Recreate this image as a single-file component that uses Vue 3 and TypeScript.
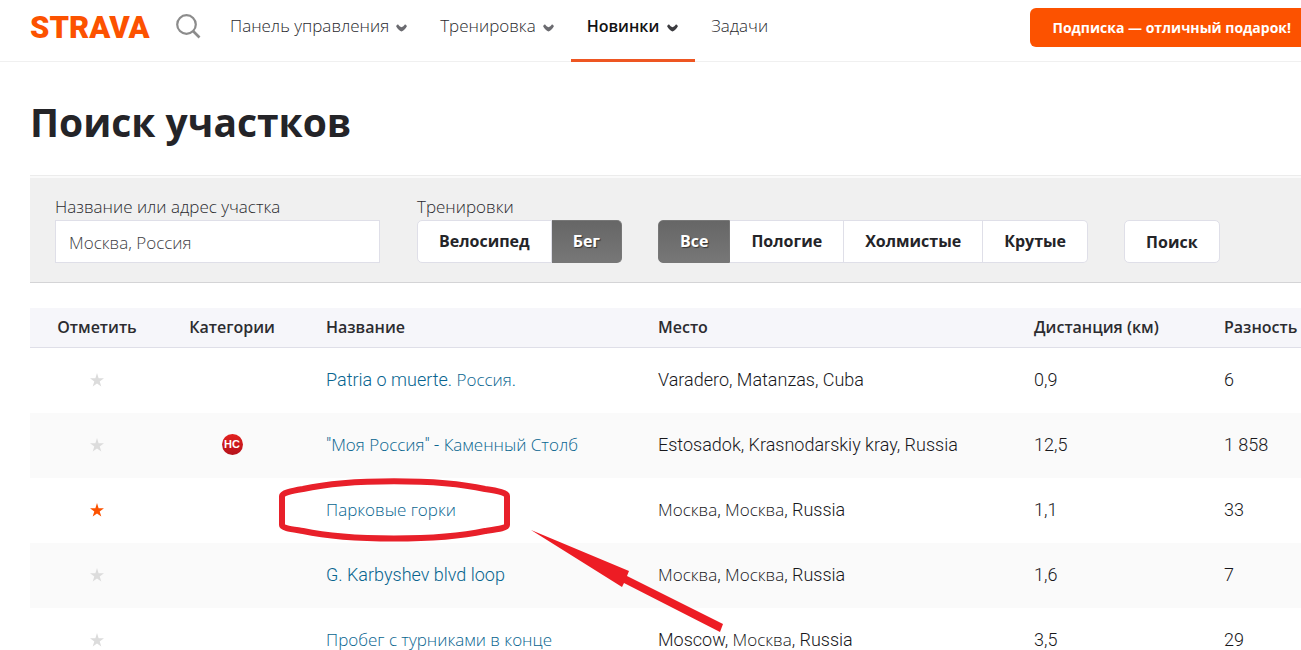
<script setup lang="ts">
import { ref } from 'vue'

interface NavItem {
  label: string
  menu: boolean
  active?: boolean
}

interface Segment {
  name: string
  place: string
  distance: string
  elevation: string
  starred?: boolean
  hc?: boolean
  marked?: boolean
}

interface Run {
  text: string
  latin: boolean
}

const nav: NavItem[] = [
  { label: 'Панель управления', menu: true },
  { label: 'Тренировка', menu: true },
  { label: 'Новинки', menu: true, active: true },
  { label: 'Задачи', menu: false },
]

const activities = ['Велосипед', 'Бег']
const terrains = ['Все', 'Пологие', 'Холмистые', 'Крутые']
const activity = ref('Бег')
const terrain = ref('Все')
const query = ref('Москва, Россия')

const segments = ref<Segment[]>([
  { name: 'Patria o muerte. Россия.', place: 'Varadero, Matanzas, Cuba', distance: '0,9', elevation: '6' },
  { name: '"Моя Россия" - Каменный Столб', place: 'Estosadok, Krasnodarskiy kray, Russia', distance: '12,5', elevation: '1 858', hc: true },
  { name: 'Парковые горки', place: 'Москва, Москва, Russia', distance: '1,1', elevation: '33', starred: true, marked: true },
  { name: 'G. Karbyshev blvd loop', place: 'Москва, Москва, Russia', distance: '1,6', elevation: '7' },
  { name: 'Пробег с турниками в конце', place: 'Moscow, Москва, Russia', distance: '3,5', elevation: '29' },
])

// Cyrillic and Latin runs are set in different families.
function runs(text: string): Run[] {
  return (text.match(/[А-Яа-яЁё]+|[^А-Яа-яЁё]+/g) ?? []).map((part) => ({
    text: part,
    latin: !/[А-Яа-яЁё]/.test(part),
  }))
}
</script>

<template>
  <div class="page">
    <header class="topbar">
      <a class="logo" href="#" aria-label="STRAVA">STRAVA</a>
      <button class="search" type="button" aria-label="Поиск">
        <svg width="26" height="26" viewBox="0 0 26 26" fill="none" stroke="#8c8c8c">
          <circle cx="10.500" cy="10.500" r="9.300" stroke-width="2.200" />
          <path d="M17 17 L23.500 23.500" stroke-width="2.600" />
        </svg>
      </button>
      <nav class="nav">
        <a v-for="item in nav" :key="item.label" href="#" class="nav-item" :class="{ active: item.active }">
          {{ item.label }}
          <svg v-if="item.menu" class="chevron" width="11" height="8" viewBox="0 0 11 8">
            <path d="M0 1.900 L1.900 0.200 C3 1.700 4.200 2.900 5.500 3.200 C6.800 2.900 8 1.700 9.100 0.200 L11 1.900 C9.600 4.600 7.500 7 5.500 7.400 C3.500 7 1.400 4.600 0 1.900 Z" fill="currentColor" />
          </svg>
        </a>
      </nav>
      <button class="gift" type="button">Подписка — отличный подарок!</button>
    </header>

    <main class="content">
      <h1>Поиск участков</h1>

      <form class="filters" @submit.prevent>
        <div class="field place-field">
          <label for="place">Название или адрес участка</label>
          <input id="place" v-model="query" type="text" />
        </div>
        <div class="field">
          <span id="activity-label" class="caption">Тренировки</span>
          <div class="group" role="group" aria-labelledby="activity-label">
            <button
              v-for="a in activities" :key="a" type="button"
              :class="{ selected: a === activity }" :aria-pressed="a === activity" @click="activity = a"
            >{{ a }}</button>
          </div>
        </div>
        <div class="group" role="group">
          <button
            v-for="t in terrains" :key="t" type="button"
            :class="{ selected: t === terrain }" :aria-pressed="t === terrain" @click="terrain = t"
          >{{ t }}</button>
        </div>
        <button class="submit" type="submit">Поиск</button>
      </form>

      <table class="results">
        <colgroup>
          <col class="c-star" /><col class="c-cat" /><col class="c-name" />
          <col class="c-place" /><col class="c-dist" /><col class="c-elev" />
        </colgroup>
        <thead>
          <tr>
            <th class="center">Отметить</th>
            <th class="center">Категории</th>
            <th>Название</th>
            <th>Место</th>
            <th>Дистанция (км)</th>
            <th>Разность</th>
          </tr>
        </thead>
        <tbody>
          <tr v-for="s in segments" :key="s.name">
            <td class="center">
              <button
                class="star" :class="{ on: s.starred }" type="button" aria-label="Отметить"
                :aria-pressed="!!s.starred" @click="s.starred = !s.starred"
              >
                <svg width="14" height="14" viewBox="0 0 14 14">
                  <path d="M7 0 L8.6 5.2 H14 L9.7 8.4 L11.3 13.6 L7 10.4 L2.7 13.6 L4.3 8.4 L0 5.2 H5.4 Z" fill="currentColor" />
                </svg>
              </button>
            </td>
            <td class="center"><span v-if="s.hc" class="hc">HC</span></td>
            <td class="name">
              <a href="#"><span v-for="(r, i) in runs(s.name)" :key="i" :class="{ latin: r.latin }">{{ r.text }}</span></a>
              <svg v-if="s.marked" class="callout" width="450" height="160" viewBox="0 0 450 160" aria-hidden="true">
                <path
                  d="M3 18 C3 15 12 13 24 11 C70 0.500 160 0.500 206 11 C220 13 228 15 228 18 V47 C228 50 220 51 206 53 C160 63 70 63 24 53 C12 51 3 50 3 47 Z"
                  fill="none" stroke="#e8202a" stroke-width="6"
                />
                <path d="M252 52 L350 93 L348 98 L444 146 L441 154 L345 105 L343 109 Z" fill="#ed1c24" />
              </svg>
            </td>
            <td><span v-for="(r, i) in runs(s.place)" :key="i" :class="{ latin: r.latin }">{{ r.text }}</span></td>
            <td class="latin">{{ s.distance }}</td>
            <td class="latin">{{ s.elevation }}</td>
          </tr>
        </tbody>
      </table>
    </main>
  </div>
</template>

<style>
body {
  margin: 0;
  background: #fff;
}
</style>

<style scoped>
.page {
  height: 100vh;
  overflow: hidden;
  font-family: 'Open Sans', 'Noto Sans', sans-serif;
  font-size: 17px;
  font-weight: 300;
  line-height: 24px;
  color: #18181c;
}

a {
  text-decoration: none;
}

button,
input {
  font-family: inherit;
  font-size: inherit;
  font-weight: inherit;
  line-height: inherit;
  box-sizing: border-box;
}

button {
  cursor: pointer;
}

.topbar {
  display: flex;
  align-items: flex-start;
  height: 61px;
  padding-left: 30px;
  border-bottom: 1px solid #f0f0f0;
}

.logo {
  width: 118px;
  margin-top: 12px;
  font-family: Roboto, sans-serif;
  font-size: 31px;
  font-weight: 900;
  line-height: 32px;
  color: #fc5200;
}

.search {
  margin: 14px 0 0 28px;
  padding: 0;
  height: 26px;
  border: 0;
  background: none;
}

.search svg {
  display: block;
}

.nav {
  display: flex;
  margin-left: 12px;
}

.nav-item {
  display: flex;
  align-items: center;
  gap: 7px;
  box-sizing: border-box;
  height: 62px;
  padding: 0 17px 7px 16px;
  border-bottom: 3px solid transparent;
  white-space: nowrap;
  color: #2a2a2e;
}

.chevron {
  margin-top: 3px;
  color: #6b6b70;
}

.nav-item.active {
  gap: 8px;
  font-size: 16px;
  font-weight: 600;
  color: #121214;
  border-bottom-color: #ee5622;
}

.nav-item.active .chevron {
  color: #3c3c40;
}

.gift {
  height: 39px;
  margin: 8px 0 0 auto;
  padding: 0 10px 0 22px;
  border: 0;
  border-radius: 6px 0 0 6px;
  background: #fc5200;
  color: #fff;
  font-size: 14px;
  font-weight: 700;
  white-space: nowrap;
}

.content {
  padding-left: 30px;
}

h1 {
  margin: 0;
  padding: 31px 0 24px;
  font-size: 39px;
  line-height: 58px;
  font-weight: 700;
  color: #242428;
}

.filters {
  display: flex;
  align-items: flex-end;
  padding: 19px 0 19px 25px;
  border-top: 1px solid #ececec;
  border-bottom: 1px solid #d4d4d6;
  background: #f0f0f0;
  box-shadow: inset 0 2px 0 #fafafa;
}

.field {
  display: flex;
  flex-direction: column;
  margin-right: 36px;
  color: #2a2a2e;
}

.field label,
.caption {
  padding-bottom: 1px;
}

.place-field {
  width: 325px;
  margin-right: 37px;
}

input {
  width: 100%;
  height: 43px;
  padding: 1px 13px 0;
  border: 1px solid #dfdfe8;
  border-radius: 0;
  background: #fff;
  color: #404044;
}

.group {
  display: flex;
}

.group button,
.submit {
  height: 43px;
  padding: 0 21px;
  border: 1px solid #dfdfe8;
  background: #fff;
  color: #242428;
  font-size: 16px;
  font-weight: 700;
  white-space: nowrap;
}

.group button {
  padding-bottom: 2px;
}

.group button + button {
  border-left: 0;
}

.group button:first-child {
  border-radius: 5px 0 0 5px;
}

.group button:last-child {
  border-radius: 0 5px 5px 0;
}

.group button.selected {
  border-color: #777;
  background: linear-gradient(#666, #777);
  color: #fff;
  text-shadow: 1px 1px 1px #333;
}

.submit {
  margin-left: 36px;
  border-radius: 5px;
}

.results {
  width: 100%;
  margin-top: 25px;
  border-collapse: separate;
  border-spacing: 0;
  table-layout: fixed;
}

.c-star {
  width: 134px;
}

.c-cat {
  width: 136px;
}

.c-place {
  width: 376px;
}

.c-dist {
  width: 190px;
}

.c-elev {
  width: 103px;
}

th,
td {
  box-sizing: border-box;
  padding: 0 0 2px 26px;
  text-align: left;
  white-space: nowrap;
}

th {
  height: 40px;
  border-bottom: 1px solid #dfdfe8;
  background: #f6f6fa;
  color: #2c2c30;
  font-size: 16px;
  font-weight: 600;
}

td {
  height: 65px;
}

tbody tr:nth-child(even) {
  background: #fafafa;
}

.center {
  padding-left: 0;
  text-align: center;
}

td.center {
  line-height: 0;
}

.latin {
  font-family: Roboto, sans-serif;
  font-size: 18px;
  font-weight: 350;
}

.name {
  position: relative;
}

.name a {
  color: #08658f;
}

.callout {
  position: absolute;
  left: -21px;
  top: 0;
  z-index: 1;
  pointer-events: none;
}

.star {
  padding: 0;
  border: 0;
  background: none;
  color: #dcdcdc;
  vertical-align: middle;
}

.star.on {
  color: #fc5200;
}

.star svg {
  display: block;
}

.hc {
  display: inline-block;
  width: 21px;
  height: 21px;
  border-radius: 50%;
  background: linear-gradient(#e3211f, #b5121b);
  color: #fff;
  font-family: 'Liberation Sans', Arial, sans-serif;
  font-size: 11px;
  line-height: 21px;
  font-weight: 700;
  vertical-align: middle;
}
</style>
